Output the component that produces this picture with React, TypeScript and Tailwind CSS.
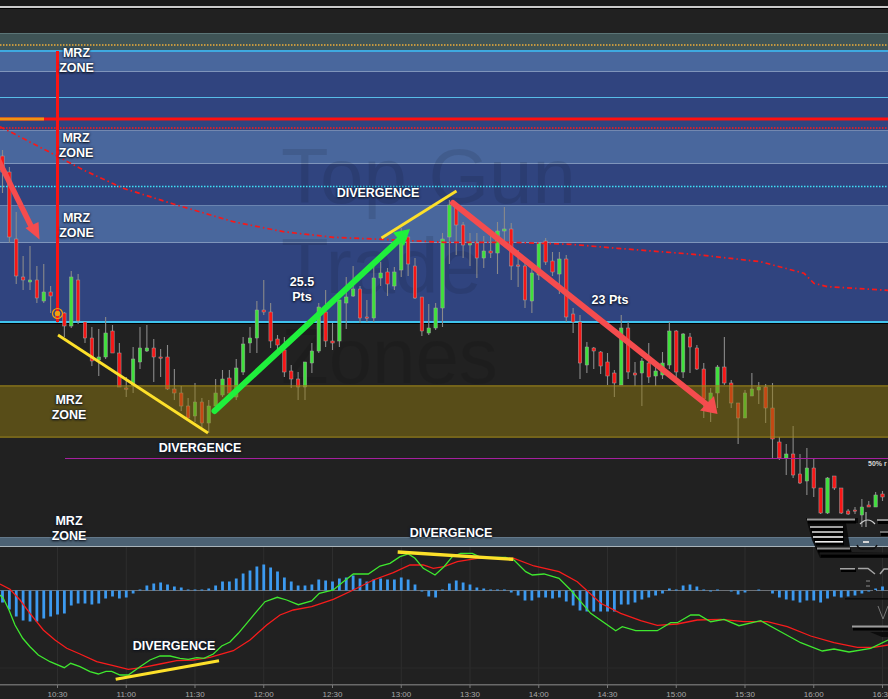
import React from "react";

type C = [number, number, number, number, "g" | "r"];
const candles: C[] = [
[150,193,156,172,"r"],[167,243,172,237,"r"],[212,284,239,276,"r"],[256,290,277,280,"r"],[246,290,280,282,"g"],[266,303,280,298,"r"],[264,303,292,301,"g"],[286,313,292,296,"r"],[296,323,312,317,"r"],[312,337,313,326,"r"],
[271,328,277,326,"g"],[274,324,280,321,"r"],[322,343,322,338,"r"],[327,366,338,361,"r"],[329,376,357,360,"g"],[317,359,333,357,"g"],[325,353,331,353,"r"],[343,387,353,387,"r"],[377,397,388,389,"r"],[347,393,359,385,"g"],
[327,369,348,362,"g"],[325,352,348,351,"g"],[339,382,348,357,"r"],[349,377,357,358,"r"],[345,390,357,389,"r"],[369,400,389,393,"r"],[386,411,393,406,"r"],[398,418,406,418,"r"],[383,422,402,416,"g"],[398,428,402,423,"r"],
[400,433,406,423,"g"],[379,407,393,406,"g"],[370,397,379,395,"g"],[370,398,378,393,"r"],[359,400,368,397,"g"],[337,375,344,372,"g"],[327,353,338,343,"g"],[301,353,310,338,"g"],[280,315,310,312,"r"],[303,348,312,341,"r"],
[335,350,339,345,"r"],[337,377,350,372,"r"],[365,388,371,379,"r"],[372,400,379,387,"r"],[362,400,362,387,"g"],[343,373,351,363,"g"],[303,353,307,351,"g"],[290,347,312,341,"r"],[323,350,341,343,"r"],[300,347,300,341,"g"],
[277,329,297,303,"g"],[266,297,289,296,"g"],[286,323,289,318,"r"],[300,322,317,318,"r"],[265,322,278,318,"g"],[262,286,273,278,"g"],[268,296,272,284,"r"],[267,290,272,286,"g"],[228,277,237,270,"g"],[237,276,237,264,"r"],
[258,299,266,298,"r"],[297,336,297,331,"r"],[304,335,328,333,"g"],[303,330,308,328,"g"],[233,327,239,308,"g"],[200,264,205,237,"g"],[204,255,205,225,"r"],[222,258,225,245,"r"],[233,266,243,245,"g"],[233,278,243,258,"r"],
[236,268,251,258,"g"],[233,258,251,253,"r"],[222,274,231,253,"g"],[207,245,229,231,"g"],[223,280,229,266,"r"],[250,287,265,266,"r"],[257,308,266,300,"r"],[265,313,273,301,"g"],[243,280,243,275,"g"],[238,265,241,262,"r"],
[252,276,261,272,"r"],[252,294,259,274,"g"],[255,322,259,317,"r"],[308,333,314,322,"r"],[315,379,322,363,"r"],[342,373,347,365,"g"],[347,369,348,351,"r"],[351,374,352,366,"r"],[353,385,362,376,"r"],[370,397,373,383,"r"],
[315,385,328,385,"g"],[322,379,328,372,"r"],[362,386,373,375,"r"],[358,406,361,373,"g"],[343,383,363,377,"r"],[365,386,371,376,"g"],[352,379,363,375,"g"],[322,369,331,365,"g"],[330,378,331,372,"r"],[333,378,334,372,"g"],
[333,373,337,347,"r"],[345,370,348,369,"r"],[363,418,369,399,"r"],[388,422,393,402,"g"],[365,408,367,393,"g"],[337,385,367,383,"r"],[380,408,383,403,"r"],[403,444,403,418,"r"],[390,418,393,418,"g"],[373,396,389,396,"g"],
[382,404,387,390,"g"],[384,423,387,408,"r"],[383,458,408,439,"r"],[437,460,442,458,"r"],[444,475,454,458,"g"],[426,478,454,475,"r"],[454,484,474,483,"r"],[448,495,468,481,"g"],[458,497,468,488,"r"],[488,514,488,513,"r"],
[477,514,478,513,"g"],[476,490,476,488,"r"],[488,514,488,513,"r"],[509,515,511,514,"r"],[507,514,510,511,"r"],[499,527,507,515,"g"],[501,507,505,507,"r"],[492,507,495,507,"g"],[491,501,494,497,"r"],
];

const hist = [12,19,26,30,31,31,28,26,24,23,15,13,13,14,13,8,6,8,7,3,-1,-5,-7,-8,-6,-4,-3,-1,-1,-1,-2,-5,-9,-9,-12,-17,-20,-24,-26,-23,-19,-13,-9,-5,-5,-6,-11,-10,-9,-12,-13,-15,-12,-9,-11,-12,-11,-11,-13,-11,-6,1,6,7,-1,-7,-10,-8,-6,-3,-2,-1,-1,-1,2,5,10,10,7,7,8,7,11,15,20,21,21,21,21,21,14,14,12,9,7,5,3,-2,-1,-5,-6,-4,-1,1,-1,0,1,4,2,0,-1,0,3,7,9,10,12,10,10,12,8,6,7,6,5,3,1,-2,-4];

const X = (i: number) => 2.5 + 6.875 * i;

const greenA: number[][] = [[0,735],[10,745],[27,780],[45,825],[68,865],[90,890],[115,915],[150,935],[193,953],[212,940],[240,950],[270,965],[295,972],[318,964],[335,964],[360,975],[385,975],[420,950],[450,930],[480,918],[510,918],[540,925],[565,928],[590,923],[612,925],[640,912],[665,888],[690,876],[715,850],[740,820],[765,790],[795,755],[832,742],[860,750],[895,764],[935,753],[958,730],[1000,720],[1030,695],[1060,672],[1105,672],[1140,648],[1170,640],[1200,620],[1225,612],[1245,625],[1270,655],[1305,675],[1332,650]];
const greenB: number[][] = [[25,620],[50,610],[85,610],[110,622],[185,622],[210,630],[245,665],[265,675],[300,672],[345,685],[380,720],[440,790],[515,842],[535,830],[575,842],[640,842],[680,818],[700,818],[740,795],[765,795],[800,815],[840,808],[885,827],[950,812],[1010,845],[1070,878],[1135,903],[1170,897],[1215,906],[1280,895],[1332,870]];
const redA: number[][] = [[0,702],[30,718],[60,750],[90,790],[130,840],[165,870],[200,895],[240,912],[290,935],[340,947],[385,958],[430,952],[480,942],[530,932],[580,930],[630,922],[700,902],[750,870],[800,825],[840,795],[880,780],[935,770],[1000,748],[1060,720],[1120,690],[1180,668],[1230,645],[1270,645],[1300,655],[1332,650]];
const redB: number[][] = [[40,635],[100,625],[210,625],[270,648],[345,665],[400,695],[470,760],[530,790],[590,812],[640,826],[700,822],[760,810],[830,808],[900,815],[970,815],[1030,830],[1100,858],[1170,878],[1240,892],[1290,892],[1332,885]];
const pts = (a: number[][], b: number[][]) =>
  [...a.map(([x, y]) => `${(x / 3).toFixed(1)},${(y / 3 + 350).toFixed(1)}`), ...b.map(([x, y]) => `${(x / 3 + 444).toFixed(1)},${(y / 3 + 350).toFixed(1)}`)].join(" ");

const maCurve: number[][] = [[0,380],[30,395],[165,465],[250,510],[370,565],[520,612],[700,665],[850,695],[1000,712],[1145,718],[1332,727],[1532,727],[1712,733],[1852,745],[2082,763],[2282,785],[2412,820],[2442,850],[2482,860],[2664,871]];
const maPts = maCurve.map(([x, y]) => `${(x / 3).toFixed(1)},${(y / 3).toFixed(1)}`).join(" ");

const times = ["10:30","11:00","11:30","12:00","12:30","13:00","13:30","14:00","14:30","15:00","15:30","16:00","16:30"];

function Label({ x, y, lines }: { x: number; y: number; lines: string[] }) {
  return (
    <div
      className="absolute z-30 -translate-x-1/2 text-center text-[12.5px] font-bold leading-[15px] whitespace-nowrap text-white [text-shadow:0_0_3px_#0b1a38,0_1px_2px_#111]"
      style={{ left: x, top: y }}
    >
      {lines.map((l) => (
        <div key={l}>{l}</div>
      ))}
    </div>
  );
}

function Stripe({ x1, x2, y, fill = "#8d8d8d", h = 2 }: { x1: number; x2: number; y: number; fill?: string; h?: number }) {
  return (
    <g>
      <rect x={x1 + 1} y={y + h} width={x2 - x1} height={h + 1} fill="#000" />
      <rect x={x1} y={y} width={x2 - x1} height={h} fill={fill} />
    </g>
  );
}

export default function App() {
  return (
    <div className="relative h-[699px] w-[888px] overflow-hidden bg-[#212121] font-['Liberation_Sans',Arial,sans-serif]">
      {/* panel stack */}
      <div className="flex flex-col">
        <div className="h-[6px] bg-[#191919]" />
        <div className="h-[2px] bg-[#c9c9c9]" />
        <div className="h-[25px] border-t border-t-black bg-[#212121]" />
        <div className="h-[17px] border-t border-t-[#5b7577] bg-[#3f5456]" />
        <div className="h-[2px] bg-[#3ea9e0]" />
        <div className="h-[19px] bg-[#49679d]" />
        <div className="h-px bg-[#7f95bb]" />
        <div className="h-[58px] bg-[#30447f]" />
        <div className="h-[33px] border-t border-t-[#7388b0] bg-[#49679d]" />
        <div className="h-[42px] border-t border-t-[#7f95bb] bg-[#30447f]" />
        <div className="h-[38px] border-y border-t-[#6a84b0] border-b-[#7f95bb] bg-[#49679d]" />
        <div className="h-[78px] bg-[#30447f]" />
        <div className="h-[2px] bg-[#3fc3ee]" />
        <div className="h-[62px] border-t border-t-black bg-[#212121]" />
        <div className="relative z-10 h-[53px] border-y-2 border-y-[#a89020]/35 bg-[#8f7a10]/50" />
        <div className="h-[99px] bg-[#212121]" />
        <div className="h-[9px] border-t border-t-[#63788a] bg-[#4c6274]" />
        <div className="h-px bg-[#a9b4ba]" />
      </div>

      {/* watermark */}
      <div className="absolute left-[281px] top-[131px] text-[78px] leading-[90px] whitespace-nowrap text-black/10">
        <div>Top Gun</div>
        <div>Trade</div>
        <div>Zones</div>
      </div>

      {/* candles and indicator */}
      <svg className="absolute inset-0 z-0" width={888} height={699} viewBox="0 0 888 699">
        {times.map((_, k) => (
          <line key={k} x1={57.5 + 68.75 * k} x2={57.5 + 68.75 * k} y1={547} y2={684} stroke="#2e2e2e" strokeWidth={1} />
        ))}
        <line x1={0} x2={888} y1={668} y2={668} stroke="#2a2a2a" />
        <line x1={0} x2={888} y1={590.5} y2={590.5} stroke="#6d7176" strokeWidth={1} />
        {hist.map((v, i) => (
          <rect key={i} x={X(i) - 1.4} y={v > 0 ? 590.5 : 590.5 + v} width={2.8} height={Math.abs(v)} fill="#3c9af0" />
        ))}
        {candles.map(([hi, lo, top, bot, c], i) => (
          <g key={i}>
            <line x1={X(i)} x2={X(i)} y1={hi} y2={lo} stroke="#8a8a8a" strokeWidth={1.1} />
            <rect
              x={X(i) - 1.7}
              y={top}
              width={3.4}
              height={Math.max(bot - top, 1.2)}
              fill={c === "g" ? "#3fe03c" : "#f81616"}
              stroke="#a4a4a4"
              strokeWidth={0.5}
            />
          </g>
        ))}
      </svg>

      {/* drawn annotations */}
      <svg className="absolute inset-0 z-20" width={888} height={699} viewBox="0 0 888 699">
        <line x1={0} x2={888} y1={45} y2={45} stroke="#f0ae3a" strokeWidth={1.5} strokeDasharray="1.5 1.5" />
        <line x1={0} x2={888} y1={97.5} y2={97.5} stroke="#58bde8" strokeWidth={1} />
        <line x1={0} x2={888} y1={119} y2={119} stroke="#ff1010" strokeWidth={3} />
        <line x1={0} x2={44} y1={119} y2={119} stroke="#ef9412" strokeWidth={3} />
        <line x1={0} x2={888} y1={128} y2={128} stroke="#ff1a1a" strokeWidth={1.5} strokeDasharray="1.5 1.5" />
        <line x1={0} x2={888} y1={186.5} y2={186.5} stroke="#3fe0f8" strokeWidth={1.5} strokeDasharray="1.5 1.5" />
        <polyline points={maPts} fill="none" stroke="#f81818" strokeWidth={1.7} strokeDasharray="5 3 1.5 3" />
        <line x1={57.5} x2={57.5} y1={51} y2={322} stroke="#fb1414" strokeWidth={3} />
        <line x1={65} x2={888} y1={458.5} y2={458.5} stroke="#a5209f" strokeWidth={1} />
        <circle cx={57.5} cy={313.5} r={5} fill="none" stroke="#f0a010" strokeWidth={1.2} />
        <circle cx={57.5} cy={313.5} r={2.7} fill="#f0a010" />

        {/* macd lines */}
        <polyline points={pts(redA, redB)} fill="none" stroke="#f81c1c" strokeWidth={1.3} />
        <polyline points={pts(greenA, greenB)} fill="none" stroke="#3fe82f" strokeWidth={1.3} />

        {/* divergence lines */}
        <g stroke="#fde02a" strokeLinecap="butt">
          <line x1={58} y1={335} x2={208} y2={433} strokeWidth={2.8} />
          <line x1={381.5} y1={238} x2={456.5} y2={191} strokeWidth={2.8} />
          <line x1={115.7} y1={679.3} x2={219} y2={660.7} strokeWidth={3.2} />
          <line x1={397.7} y1={552} x2={513.3} y2={559.3} strokeWidth={3.4} />
        </g>

        {/* arrows */}
        <g>
          <line x1={214.5} y1={411} x2={400} y2={239} stroke="#1ff03c" strokeWidth={6} strokeLinecap="round" />
          <polygon points="410,229 393,232.5 404,246" fill="#1ff03c" />
          <line x1={-4} y1={155} x2={32} y2={228} stroke="#f54c4e" strokeWidth={5.5} />
          <polygon points="39.5,239.5 25.5,228 38.5,222" fill="#f54c4e" />
          <line x1={453} y1={203} x2={706} y2={404} stroke="#f54c4e" strokeWidth={6} strokeLinecap="round" />
          <polygon points="717.5,414 700,410.5 714,396" fill="#f54c4e" />
        </g>

        {/* axis */}
        <rect x={0} y={684} width={888} height={1.5} fill="#6a6a6a" />
        {times.map((_, k) => (
          <line key={k} x1={57.5 + 68.75 * k} x2={57.5 + 68.75 * k} y1={685} y2={688} stroke="#777" />
        ))}

        {/* logo */}
        <polygon points="806,518 858,518 858,523 846,523 850,547 852,552 888,553 888,558 820,558 812,540" fill="#0a0a0a" opacity={0.9} />
        <Stripe x1={807} x2={855} y={518.5} fill="#9a9a9a" />
        <Stripe x1={810} x2={843} y={526} fill="#a0a0a0" />
        <Stripe x1={812} x2={843} y={531} fill="#a8a8a8" />
        <Stripe x1={813} x2={843} y={536} fill="#c2c2c2" />
        <Stripe x1={815} x2={843} y={541} fill="#efefef" h={1.6} />
        <Stripe x1={817} x2={850} y={547.5} fill="#8a8a8a" />
        <Stripe x1={820} x2={888} y={552.5} fill="#1a1a1a" />
        <path d="M860 524 Q868 516 875 524" fill="none" stroke="#cfcfcf" strokeWidth={1.2} />
        <path d="M866 512 V527" stroke="#bdbdbd" strokeWidth={1} />
        <Stripe x1={877} x2={888} y={519} fill="#8d8d8d" />
        <Stripe x1={880} x2={888} y={531} fill="#707070" />
        <rect x={863} y={541} width={6} height={2} fill="#d5d5d5" />
        <path d="M857 545 Q859 550 864 549 H872 Q875 549 877 545" fill="none" stroke="#111" strokeWidth={1.5} />
        <Stripe x1={840} x2={855} y={568} fill="#a5a5a5" h={1.5} />
        <path d="M858 568.5 H868 L875 574" fill="none" stroke="#a5a5a5" strokeWidth={1.5} />
        <path d="M880 574 L884 569 H888" fill="none" stroke="#a5a5a5" strokeWidth={1.5} />
        <rect x={866} y={580} width={4} height={2} fill="#555" />
        <rect x={866} y={585} width={4} height={2} fill="#555" />
        <rect x={873} y={590} width={3} height={2} fill="#222" />
        <rect x={845} y={598} width={43} height={1.6} fill="#0c0c0c" />
        <path d="M878 606 L883 619 L888 606" fill="none" stroke="#777" strokeWidth={1} />
        <Stripe x1={852} x2={888} y={625.5} fill="#9c9c9c" />
        <path d="M870 632 H888 V637 H882 Z" fill="#0c0c0c" />
      </svg>

      {/* labels */}
      <Label x={76.5} y={46} lines={["MRZ", "ZONE"]} />
      <Label x={76} y={131} lines={["MRZ", "ZONE"]} />
      <Label x={76.5} y={211} lines={["MRZ", "ZONE"]} />
      <Label x={69} y={393} lines={["MRZ", "ZONE"]} />
      <Label x={69} y={514} lines={["MRZ", "ZONE"]} />
      <Label x={378} y={186} lines={["DIVERGENCE"]} />
      <Label x={200} y={441} lines={["DIVERGENCE"]} />
      <Label x={174} y={638.5} lines={["DIVERGENCE"]} />
      <Label x={451} y={525.5} lines={["DIVERGENCE"]} />
      <Label x={302} y={274.5} lines={["25.5", "Pts"]} />
      <Label x={610} y={293} lines={["23 Pts"]} />

      <div className="absolute left-[868px] top-[459px] z-30 text-[7px] font-bold leading-[9px] whitespace-nowrap text-[#d8d8d8]">50% r</div>

      {/* time axis */}
      {times.map((t, k) => (
        <div
          key={t}
          className="absolute top-[690px] z-30 -translate-x-1/2 text-[8px] leading-[10px] text-[#a8a8a8]"
          style={{ left: 57.5 + 68.75 * k }}
        >
          {t}
        </div>
      ))}
    </div>
  );
}
